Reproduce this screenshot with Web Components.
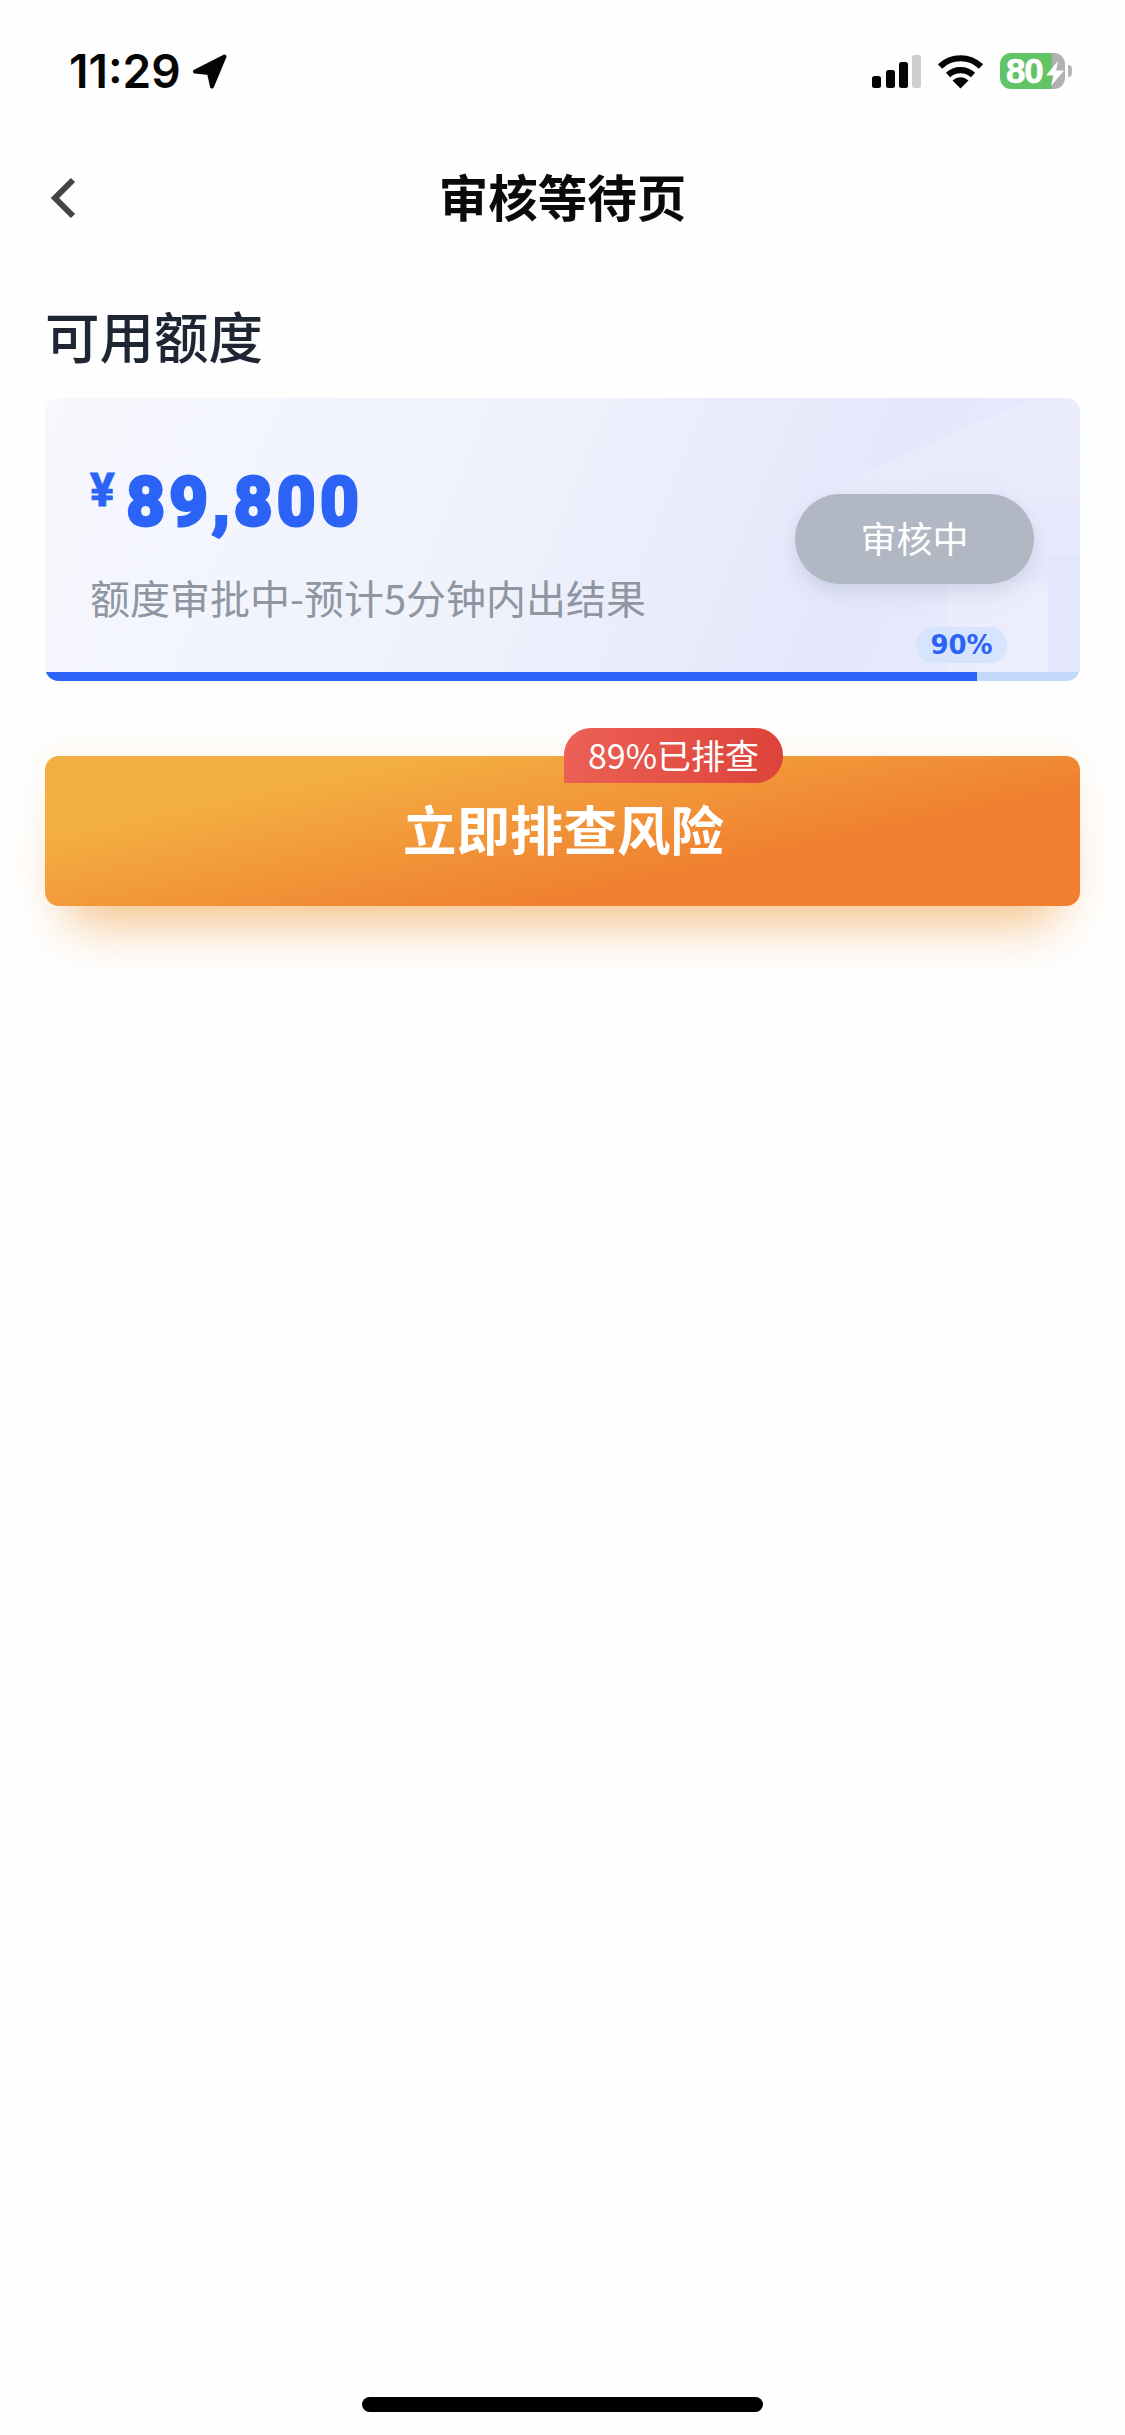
<!DOCTYPE html>
<html lang="zh">
<head>
<meta charset="utf-8">
<title>审核等待页</title>
<style>
  html, body { margin: 0; background: #fefefe; }
  body { font-family: "Noto Sans CJK SC", sans-serif; }
</style>
</head>
<body>
<app-shell>
  <status-bar time="11:29" battery="80"></status-bar>
  <nav-bar>审核等待页</nav-bar>
  <section-title>可用额度</section-title>
  <quota-card amount="89,800" state="审核中" percent="90">额度审批中-预计5分钟内出结果</quota-card>
  <risk-button badge="89%已排查">立即排查风险</risk-button>
  <home-indicator></home-indicator>
</app-shell>

<script>
class AppShell extends HTMLElement {
  constructor() {
    super();
    this.attachShadow({mode: 'open'}).innerHTML = `
      <style>
        :host { display: flex; flex-direction: column; height: 2435px; width: 1125px; background: #fefefe; overflow: hidden; }
      </style>
      <slot></slot>
    `;
  }
}

class StatusBar extends HTMLElement {
  constructor() {
    super();
    this._shadowRoot = this.attachShadow({mode: 'open'});
  }

  connectedCallback() {
    this._shadowRoot.innerHTML = `
      <style>
        :host { display: flex; align-items: flex-start; justify-content: space-between; height: 143px; box-sizing: border-box; padding: 53px 53px 0 69px; }
        .left, .right { display: flex; align-items: center; height: 36px; }
        .time { font: 600 46px/36px Inter, "Liberation Sans", sans-serif; color: #050505; }
        .left svg { margin-left: 11px; margin-top: 1px; }
        .right svg.sig { margin-right: 16px; margin-top: 1px; }
        .right svg.wifi { margin-right: 16px; }
        .batt { position: relative; display: flex; align-items: center; width: 65px; height: 36px; box-sizing: border-box; padding-left: 6px; border-radius: 11px; background: linear-gradient(90deg, #62c466 80%, #b1b1b1 80%); color: #fff; font: 700 35px/36px "Liberation Sans", sans-serif; letter-spacing: -1.2px; -webkit-text-stroke: .6px #fff; }
        .batt svg { position: absolute; left: 46px; top: 8px; }
        .tip { width: 4px; height: 12px; margin-left: 3px; background: #b5b5b5; border-radius: 0 4px 4px 0; }
      </style>
      <div class="left">
        <span class="time">${this.getAttribute('time')}</span>
        <svg width="35" height="35" viewBox="0 0 35 35"><path d="M32.5 2.5 3 17.5 17 19 20 32.5Z" fill="#050505" stroke="#050505" stroke-width="4" stroke-linejoin="round"/></svg>
      </div>
      <div class="right">
        <svg class="sig" width="49" height="33" viewBox="0 0 49 33">
          <rect x="0" y="21" width="9" height="12" rx="2.5" fill="#050505"/>
          <rect x="14" y="15" width="9" height="18" rx="2.5" fill="#050505"/>
          <rect x="27" y="7" width="9" height="26" rx="2.5" fill="#050505"/>
          <rect x="40" y="0" width="9" height="33" rx="2.5" fill="#cfcfcf"/>
        </svg>
        <svg class="wifi" width="47" height="35" viewBox="0 0 47 35">
          <path d="M3 12.5C14.5 1.5 32.5 1.5 44 12.5" fill="none" stroke="#050505" stroke-width="6.2"/>
          <path d="M11 21C18 14.5 29 14.5 36 21" fill="none" stroke="#050505" stroke-width="6.2"/>
          <path d="M15.5 26.5C20.5 22 26.5 22 31.5 26.5L23.5 34.5Z" fill="#050505"/>
        </svg>
        <div class="batt">${this.getAttribute('battery')}
          <svg width="18" height="25" viewBox="0 0 18 25"><path d="M12 0 0 14.5H7.5L5 25 18 9.5H10Z" fill="#fff"/></svg>
        </div>
        <div class="tip"></div>
      </div>
    `;
  }
}

class NavBar extends HTMLElement {
  constructor() {
    super();
    this.attachShadow({mode: 'open'}).innerHTML = `
      <style>
        :host { display: block; position: relative; height: 110px; }
        .wrap { display: flex; align-items: center; justify-content: center; height: 100%; box-sizing: border-box; padding-bottom: 6px; font-size: 49.5px; font-weight: 600; color: #0a0a0a; }
        svg { position: absolute; left: 50px; top: 34px; }
      </style>
      <svg width="26" height="42" viewBox="0 0 26 42"><path d="M23 3 5 21 23 39" fill="none" stroke="#444" stroke-width="6"/></svg>
      <div class="wrap"><slot></slot></div>
    `;
  }
}

class SectionTitle extends HTMLElement {
  constructor() {
    super();
    this.attachShadow({mode: 'open'}).innerHTML = `
      <style>
        :host { display: block; margin: 55px 45px 0; height: 56px; font-size: 54.5px; line-height: 54px; font-weight: 500; color: #1e2633; }
      </style>
      <slot></slot>
    `;
  }
}

class QuotaCard extends HTMLElement {
  constructor() {
    super();
    this._shadowRoot = this.attachShadow({mode: 'open'});
  }

  connectedCallback() {
    const percent = this.getAttribute('percent');
    this._shadowRoot.innerHTML = `
      <style>
        :host { display: block; position: relative; margin: 34px 45px 0; height: 283px; border-radius: 14px; overflow: hidden; background: linear-gradient(112deg, #f7f8fe 0%, #eff1fc 45%, #e5e8fb 75%, #e7eafc 100%); }
        .deco { position: absolute; left: 0; top: 0; }
        .body { position: relative; display: flex; justify-content: space-between; height: 274px; box-sizing: border-box; padding: 0 46px 0 45px; }
        .amount { display: flex; align-items: flex-start; height: 72px; margin-top: 69px; color: #2b63f6; font: 700 66px/72px Roboto, "Liberation Sans", sans-serif; letter-spacing: 5.2px; -webkit-text-stroke: 4px #2b63f6; }
        .amount i { font: 700 46px/46px Roboto, sans-serif; font-style: normal; letter-spacing: 0; -webkit-text-stroke: 1px #2b63f6; margin-right: 12px; margin-top: 0; }
        .sub { margin-top: 36px; font-size: 40px; line-height: 44px; color: #8f96a1; white-space: nowrap; }
        .state { align-self: flex-start; margin-top: 96px; width: 239px; height: 90px; box-sizing: border-box; padding-bottom: 5px; border-radius: 45px; display: flex; align-items: center; justify-content: center; background: #b1b8c4; color: #fff; font-size: 36px; box-shadow: 0 8px 18px rgba(140,150,180,.28); }
        .pct { position: absolute; left: 871px; top: 229px; width: 91px; height: 36px; border-radius: 18px; display: flex; align-items: center; justify-content: center; background: #d6e5fd; color: #2b63f6; font: 700 26px/36px "DejaVu Sans", sans-serif; }
        .track { position: relative; height: 9px; background: #c3d9fa; }
        .fill { height: 100%; width: ${percent}%; background: #2b63f6; }
      </style>
      <svg class="deco" width="1035" height="283" viewBox="0 0 1035 283">
        <defs>
          <linearGradient id="fade" x1="0" y1="0" x2="0.15" y2="1">
            <stop offset="0" stop-color="#fff" stop-opacity=".22"/>
            <stop offset="1" stop-color="#fff" stop-opacity="0"/>
          </linearGradient>
        </defs>
        <path d="M795 85 990 0H1035V180H795Z" fill="url(#fade)"/>
        <path d="M1003 157H1035V283H1003Z" fill="#e0e4fa" fill-opacity=".55"/>
        <rect x="902" y="184" width="101" height="99" rx="8" fill="#fff" fill-opacity=".2"/>
      </svg>
      <div class="body">
        <div>
          <div class="amount"><i>¥</i>${this.getAttribute('amount')}</div>
          <div class="sub"><slot></slot></div>
        </div>
        <div class="state">${this.getAttribute('state')}</div>
      </div>
      <div class="pct">${percent}%</div>
      <div class="track"><div class="fill"></div></div>
    `;
  }
}

class RiskButton extends HTMLElement {
  constructor() {
    super();
    this._shadowRoot = this.attachShadow({mode: 'open'});
  }

  connectedCallback() {
    this._shadowRoot.innerHTML = `
      <style>
        :host { display: flex; position: relative; align-items: center; justify-content: center; margin: 75px 45px 0; height: 150px; box-sizing: border-box; padding: 0 0 8px 2px; border-radius: 14px; color: #fff; font-size: 53.5px; font-weight: 600; background: linear-gradient(168deg, #f3ae42 22%, #f08030 68%); box-shadow: 0 44px 50px -26px rgba(241,150,50,.55), 0 -4px 34px rgba(240,170,90,.12); }
        .badge { position: absolute; left: 519px; top: -28px; width: 219px; height: 55px; box-sizing: border-box; padding-bottom: 2px; border-radius: 27px 27px 27px 0; display: flex; align-items: center; justify-content: center; background: linear-gradient(90deg, #ec6055, #dd433a); font-size: 34px; font-weight: 400; }
      </style>
      <div class="badge">${this.getAttribute('badge')}</div>
      <slot></slot>
    `;
  }
}

class HomeIndicator extends HTMLElement {
  constructor() {
    super();
    this.attachShadow({mode: 'open'}).innerHTML = `
      <style>
        :host { display: block; width: 401px; height: 15px; margin: auto auto 23px; border-radius: 8px; background: #000; }
      </style>
    `;
  }
}

customElements.define('app-shell', AppShell);
customElements.define('status-bar', StatusBar);
customElements.define('nav-bar', NavBar);
customElements.define('section-title', SectionTitle);
customElements.define('quota-card', QuotaCard);
customElements.define('risk-button', RiskButton);
customElements.define('home-indicator', HomeIndicator);
</script>
</body>
</html>
